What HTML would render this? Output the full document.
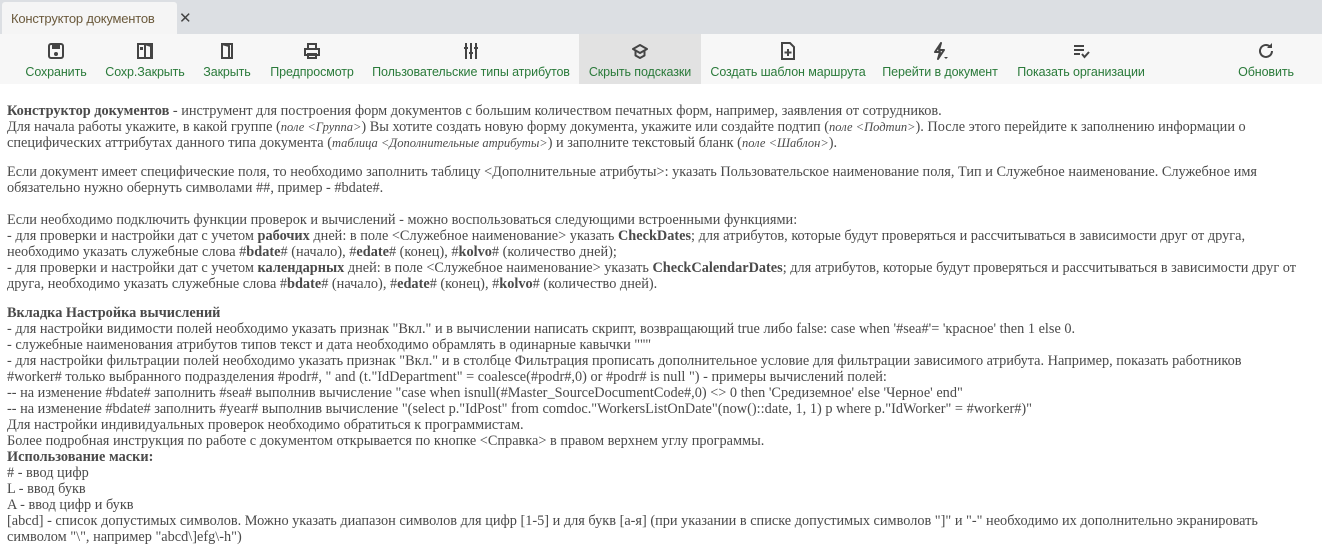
<!DOCTYPE html>
<html><head><meta charset="utf-8"><style>
*{margin:0;padding:0;box-sizing:border-box}
body{width:1322px;height:559px;background:#fff;overflow:hidden;font-family:"Liberation Sans","DejaVu Sans",sans-serif}
.top{height:34px;background:#dcdfe3;position:relative}
.tab{position:absolute;left:2px;top:2px;width:175px;height:32px;background:#f5f5f5;border-radius:3px 3px 0 0;font-size:13px;color:#6b5a3c;padding:9px 0 0 9px;letter-spacing:-0.2px}
.tab b{position:absolute;left:177px;top:7px;font-size:15px;color:#444}
.tb{position:absolute;top:34px;left:0;width:1322px;height:50px;background:#f7f7f7}
.btn{position:absolute;top:0;height:50px;text-align:center;font-size:12.5px;color:#2a7a3a;letter-spacing:-0.1px}
.btn span{position:absolute;left:-10px;right:-10px;top:31px;white-space:nowrap}
.btn svg{position:absolute;top:8px;left:50%;margin-left:-9px}
.txt{position:absolute;left:7px;top:103px;font-family:"Liberation Serif",serif;font-size:14.3px;color:#4a4a4a;line-height:16px;white-space:nowrap}
.txt i{font-size:12.5px}
</style></head><body>
<div class="top"><div class="tab">Конструктор документов<b>✕</b></div></div>
<div class="tb">
<div class="btn" style="left:20px;width:72px"><svg width="18" height="18" viewBox="0 0 18 18"><rect x="2" y="2" width="14" height="14" rx="2" fill="none" stroke="#444" stroke-width="2"/><rect x="5" y="3" width="8" height="4" fill="#444"/><circle cx="9" cy="12" r="2" fill="#444"/></svg><span>Сохранить</span></div>
<div class="btn" style="left:102px;width:86px"><svg width="18" height="18" viewBox="0 0 18 18"><path d="M2 2h14v14H2z M9 2v14 M9 2l6 2v12" fill="none" stroke="#444" stroke-width="2"/><rect x="4" y="5" width="3" height="3" fill="#444"/></svg><span>Сохр.Закрыть</span></div>
<div class="btn" style="left:198px;width:58px"><svg width="18" height="18" viewBox="0 0 18 18"><path d="M4 2h10v14H4z M4 2l7 2v13" fill="none" stroke="#444" stroke-width="2"/></svg><span>Закрыть</span></div>
<div class="btn" style="left:266px;width:92px"><svg width="18" height="18" viewBox="0 0 18 18"><path d="M5 6V2h8v4 M2 7h14v6H2z M5 12h8v4H5z" fill="none" stroke="#444" stroke-width="2"/></svg><span>Предпросмотр</span></div>
<div class="btn" style="left:368px;width:206px"><svg width="18" height="18" viewBox="0 0 18 18"><path d="M4 1v16 M9 1v16 M14 1v16" stroke="#444" stroke-width="2"/><path d="M2 6h4 M7 11h4 M12 6h4" stroke="#444" stroke-width="2"/></svg><span>Пользовательские типы атрибутов</span></div>
<div class="btn" style="left:579px;width:122px;background:#e2e2e2"><svg width="18" height="18" viewBox="0 0 18 18"><path d="M9 3l7 4-7 4-7-4z M4.5 9v4.5l4.5 2.5 4.5-2.5V9" fill="none" stroke="#444" stroke-width="2" stroke-linejoin="round"/></svg><span>Скрыть подсказки</span></div>
<div class="btn" style="left:706px;width:164px"><svg width="18" height="18" viewBox="0 0 18 18"><path d="M3 1h8l4 4v12H3z" fill="none" stroke="#444" stroke-width="2"/><path d="M9 7v7M5.5 10.5h7" stroke="#444" stroke-width="2"/></svg><span>Создать шаблон маршрута</span></div>
<div class="btn" style="left:878px;width:124px"><svg width="18" height="18" viewBox="0 0 18 18"><path d="M10 1L4 10h5l-2 7 6-9H8z" fill="none" stroke="#444" stroke-width="2" stroke-linejoin="round"/><path d="M13 15h4l-2 2z" fill="#444"/></svg><span>Перейти в документ</span></div>
<div class="btn" style="left:1010px;width:142px"><svg width="18" height="18" viewBox="0 0 18 18"><path d="M2 4h10M2 8h10M2 12h6" stroke="#444" stroke-width="2"/><path d="M10 12l2.5 3 4.5-5" fill="none" stroke="#444" stroke-width="2"/></svg><span>Показать организации</span></div>
<div class="btn" style="left:1232px;width:68px"><svg width="18" height="18" viewBox="0 0 18 18"><path d="M15 9a6 6 0 1 1-2-4.5" fill="none" stroke="#444" stroke-width="2"/><path d="M15 1v5h-5z" fill="#444"/></svg><span>Обновить</span></div>
</div>
<div class="txt">
<b>Конструктор документов</b> - инструмент для построения форм документов с большим количеством печатных форм, например, заявления от сотрудников.<br>
Для начала работы укажите, в какой группе (<i>поле &lt;Группа&gt;</i>) Вы хотите создать новую форму документа, укажите или создайте подтип (<i>поле &lt;Подтип&gt;</i>). После этого перейдите к заполнению информации о<br>
специфических аттрибутах данного типа документа (<i>таблица &lt;Дополнительные атрибуты&gt;</i>) и заполните текстовый бланк (<i>поле &lt;Шаблон&gt;</i>).<br>
<div style="height:13px"></div>
Если документ имеет специфические поля, то необходимо заполнить таблицу &lt;Дополнительные атрибуты&gt;: указать Пользовательское наименование поля, Тип и Служебное наименование. Служебное имя<br>
обязательно нужно обернуть символами ##, пример - #bdate#.<br>
<div style="height:16px"></div>
Если необходимо подключить функции проверок и вычислений - можно воспользоваться следующими встроенными функциями:<br>
- для проверки и настройки дат с учетом <b>рабочих</b> дней: в поле &lt;Служебное наименование&gt; указать <b>CheckDates</b>; для атрибутов, которые будут проверяться и рассчитываться в зависимости друг от друга,<br>
необходимо указать служебные слова #<b>bdate</b># (начало), #<b>edate</b># (конец), #<b>kolvo</b># (количество дней);<br>
- для проверки и настройки дат с учетом <b>календарных</b> дней: в поле &lt;Служебное наименование&gt; указать <b>CheckCalendarDates</b>; для атрибутов, которые будут проверяться и рассчитываться в зависимости друг от<br>
друга, необходимо указать служебные слова #<b>bdate</b># (начало), #<b>edate</b># (конец), #<b>kolvo</b># (количество дней).<br>
<div style="height:13px"></div>
<b>Вкладка Настройка вычислений</b><br>
- для настройки видимости полей необходимо указать признак "Вкл." и в вычислении написать скрипт, возвращающий true либо false: case when '#sea#'= 'красное' then 1 else 0.<br>
- служебные наименования атрибутов типов текст и дата необходимо обрамлять в одинарные кавычки "''"<br>
- для настройки фильтрации полей необходимо указать признак "Вкл." и в столбце Фильтрация прописать дополнительное условие для фильтрации зависимого атрибута. Например, показать работников<br>
#worker# только выбранного подразделения #podr#, " and (t."IdDepartment" = coalesce(#podr#,0) or #podr# is null ") - примеры вычислений полей:<br>
-- на изменение #bdate# заполнить #sea# выполнив вычисление "case when isnull(#Master_SourceDocumentCode#,0) &lt;&gt; 0 then 'Средиземное' else 'Черное' end"<br>
-- на изменение #bdate# заполнить #year# выполнив вычисление "(select p."IdPost" from comdoc."WorkersListOnDate"(now()::date, 1, 1) p where p."IdWorker" = #worker#)"<br>
Для настройки индивидуальных проверок необходимо обратиться к программистам.<br>
Более подробная инструкция по работе с документом открывается по кнопке &lt;Справка&gt; в правом верхнем углу программы.<br>
<b>Использование маски:</b><br>
# - ввод цифр<br>
L - ввод букв<br>
A - ввод цифр и букв<br>
[abcd] - список допустимых символов. Можно указать диапазон символов для цифр [1-5] и для букв [а-я] (при указании в списке допустимых символов "]" и "-" необходимо их дополнительно экранировать<br>
символом "\", например "abcd\]efg\-h")
</div>
</body></html>
